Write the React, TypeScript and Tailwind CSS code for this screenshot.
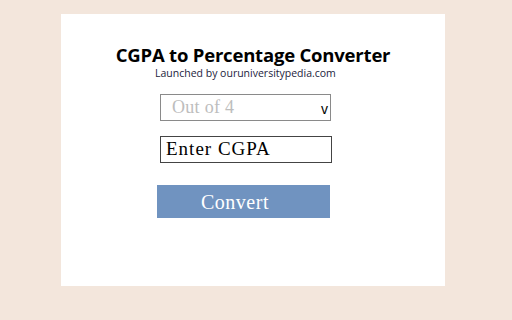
export default function App() {
  return (
    <div className="w-[512px] h-[320px] bg-[#f3e6dc] pt-[14px] pl-[61px]">
      <div className="w-[384px] h-[272px] bg-white flex flex-col">
        <h1 className="mt-[30px] text-center text-[18.5px] leading-[22px] font-bold text-black font-['Open_Sans',sans-serif] tracking-[-0.2px]">
          CGPA to Percentage Converter
        </h1>
        <div className="ml-[94px] text-[10.5px] leading-[14px] text-[#1c1c3c] font-['Open_Sans',sans-serif]">
          Launched by ouruniversitypedia.com
        </div>
        <div className="ml-[99px] mt-[14px] w-[171px] h-[27px] border border-[#8a8a8a] flex items-center justify-between pl-[11px] pr-[2px]">
          <span className="text-[18px] text-[#bdbdbd] font-['Liberation_Serif',serif] tracking-[0.3px]">Out of 4</span>
          <span className="text-[14px] font-['Liberation_Sans',sans-serif] text-black mt-[3px]">v</span>
        </div>
        <div className="ml-[99px] mt-[15px] w-[172px] h-[27px] border border-[#444] flex items-center pl-[5px]">
          <span className="text-[19px] text-black font-['Liberation_Serif',serif] tracking-[1px]">Enter CGPA</span>
        </div>
        <button className="ml-[96px] mt-[22px] w-[173px] h-[33px] bg-[#7093c0] text-white text-[20px] font-['Liberation_Serif',serif] tracking-[0.5px] flex items-center justify-center pr-[17px]">
          Convert
        </button>
      </div>
    </div>
  );
}
